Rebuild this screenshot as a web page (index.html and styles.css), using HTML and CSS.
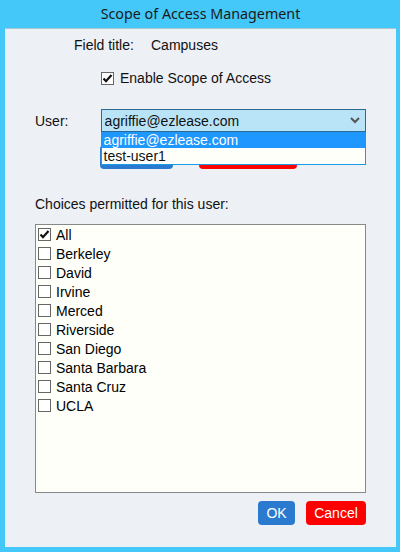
FILE: index.html
```html
<!DOCTYPE html>
<html>
<head>
<meta charset="utf-8">
<link rel="stylesheet" href="styles.css">
</head>
<body>
<div class="frame">
  <div class="titlebar">Scope of Access Management</div>
  <div class="panel">
    <div class="field-row">
      <span class="field-label">Field title:</span>
      <span class="field-value">Campuses</span>
    </div>
    <div class="enable-row">
      <span class="cb checked"><svg viewBox="0 0 13 13" width="13" height="13"><path d="M2.5 6.5 L5 9.2 L10.5 3" fill="none" stroke="#111" stroke-width="2.2"/></svg></span>
      <span class="enable-label">Enable Scope of Access</span>
    </div>
    <div class="user-row">
      <span class="user-label">User:</span>
      <div class="select-wrap">
        <div class="select">
          <span>agriffie@ezlease.com</span>
          <svg class="chev" viewBox="0 0 10 7" width="10" height="7"><path d="M1 1 L5 5 L9 1" fill="none" stroke="#555" stroke-width="2"/></svg>
        </div>
        <div class="dropdown">
          <div class="opt sel">agriffie@ezlease.com</div>
          <div class="opt">test-user1</div>
        </div>
      </div>
    </div>
    <div class="hidden-btns">
      <span class="hb blue"></span>
      <span class="hb red"></span>
    </div>
    <div class="choices-label">Choices permitted for this user:</div>
    <div class="list">
      <div class="item"><span class="cb checked"><svg viewBox="0 0 13 13" width="13" height="13"><path d="M2.5 6.5 L5 9.2 L10.5 3" fill="none" stroke="#111" stroke-width="2.2"/></svg></span>All</div>
      <div class="item"><span class="cb"></span>Berkeley</div>
      <div class="item"><span class="cb"></span>David</div>
      <div class="item"><span class="cb"></span>Irvine</div>
      <div class="item"><span class="cb"></span>Merced</div>
      <div class="item"><span class="cb"></span>Riverside</div>
      <div class="item"><span class="cb"></span>San Diego</div>
      <div class="item"><span class="cb"></span>Santa Barbara</div>
      <div class="item"><span class="cb"></span>Santa Cruz</div>
      <div class="item"><span class="cb"></span>UCLA</div>
    </div>
    <div class="footer">
      <span class="btn ok">OK</span>
      <span class="btn cancel">Cancel</span>
    </div>
  </div>
</div>
</body>
</html>
```

FILE: styles.css
```css
html, body {
  margin: 0;
  padding: 0;
}
body {
  width: 400px;
  height: 552px;
  overflow: hidden;
  font-family: "Liberation Sans", Arial, sans-serif;
  font-size: 14px;
  color: #111;
}
.frame {
  background: #44c8f9;
  height: 552px;
  box-sizing: border-box;
  padding: 0 4px 5px 5px;
  display: flex;
  flex-direction: column;
}
.titlebar {
  height: 28px;
  line-height: 27px;
  text-align: center;
  font-family: "Noto Sans", "Open Sans", sans-serif;
  font-size: 14.3px;
  color: #1a1a1a;
  flex: none;
}
.panel {
  flex: 1;
  background: #edf0f5;
  border-top: 1px solid #a9c4d4;
  display: flex;
  flex-direction: column;
  padding: 0 30px 0 30px;
}
.field-row {
  margin-top: 8px;
  height: 16px;
  line-height: 16px;
  display: flex;
}
.field-label {
  margin-left: 39px;
  width: 77px;
}
.enable-row {
  margin-top: 17px;
  height: 16px;
  display: flex;
  align-items: center;
  padding-left: 66px;
}
.cb {
  width: 13px;
  height: 13px;
  box-sizing: border-box;
  border: 1px solid #666;
  background: #fff;
  display: inline-flex;
  align-items: center;
  justify-content: center;
  flex: none;
}
.cb svg {
  display: block;
  margin: -1px;
}
.enable-label {
  margin-left: 6px;
}
.user-row {
  margin-top: 23px;
  display: flex;
  align-items: center;
  height: 23px;
}
.user-label {
  width: 66px;
}
.select-wrap {
  position: relative;
  width: 267px;
}
.select {
  height: 23px;
  box-sizing: border-box;
  border: 1px solid #2b6a93;
  background: #b9e4f8;
  display: flex;
  align-items: center;
  justify-content: space-between;
  padding: 0 4px 0 3px;
}
.chev {
  margin-right: 1px;
}
.dropdown {
  position: absolute;
  left: 0;
  right: 0;
  top: 23px;
  border: 1px solid #1a9be8;
  border-top: none;
  background: #fffffa;
  z-index: 2;
}
.opt {
  height: 16px;
  line-height: 16px;
  padding-left: 2px;
}
.opt.sel {
  background: #1e98ff;
  color: #fff;
}
.hidden-btns {
  margin-top: 13px;
  height: 24px;
  display: flex;
  padding-left: 65px;
}
.hb {
  border-radius: 4px;
}
.hb.blue {
  width: 73px;
  background: #2a7bd0;
}
.hb.red {
  width: 98px;
  margin-left: 26px;
  background: #ff0000;
}
.choices-label {
  margin-top: 27px;
  height: 16px;
  line-height: 16px;
}
.list {
  margin-top: 12px;
  height: 269px;
  box-sizing: border-box;
  border: 1px solid #888;
  background: #fffffa;
  padding: 0 0 0 2px;
}
.item {
  height: 19px;
  display: flex;
  align-items: center;
  color: #000;
}
.item .cb {
  margin-right: 5px;
}
.footer {
  margin-top: 8px;
  display: flex;
  justify-content: flex-end;
  gap: 11px;
}
.btn {
  height: 24px;
  border-radius: 4px;
  color: #fff;
  display: flex;
  align-items: center;
  justify-content: center;
}
.btn.ok {
  width: 37px;
  background: #2a7bd0;
}
.btn.cancel {
  width: 60px;
  background: #ff0000;
}
```
